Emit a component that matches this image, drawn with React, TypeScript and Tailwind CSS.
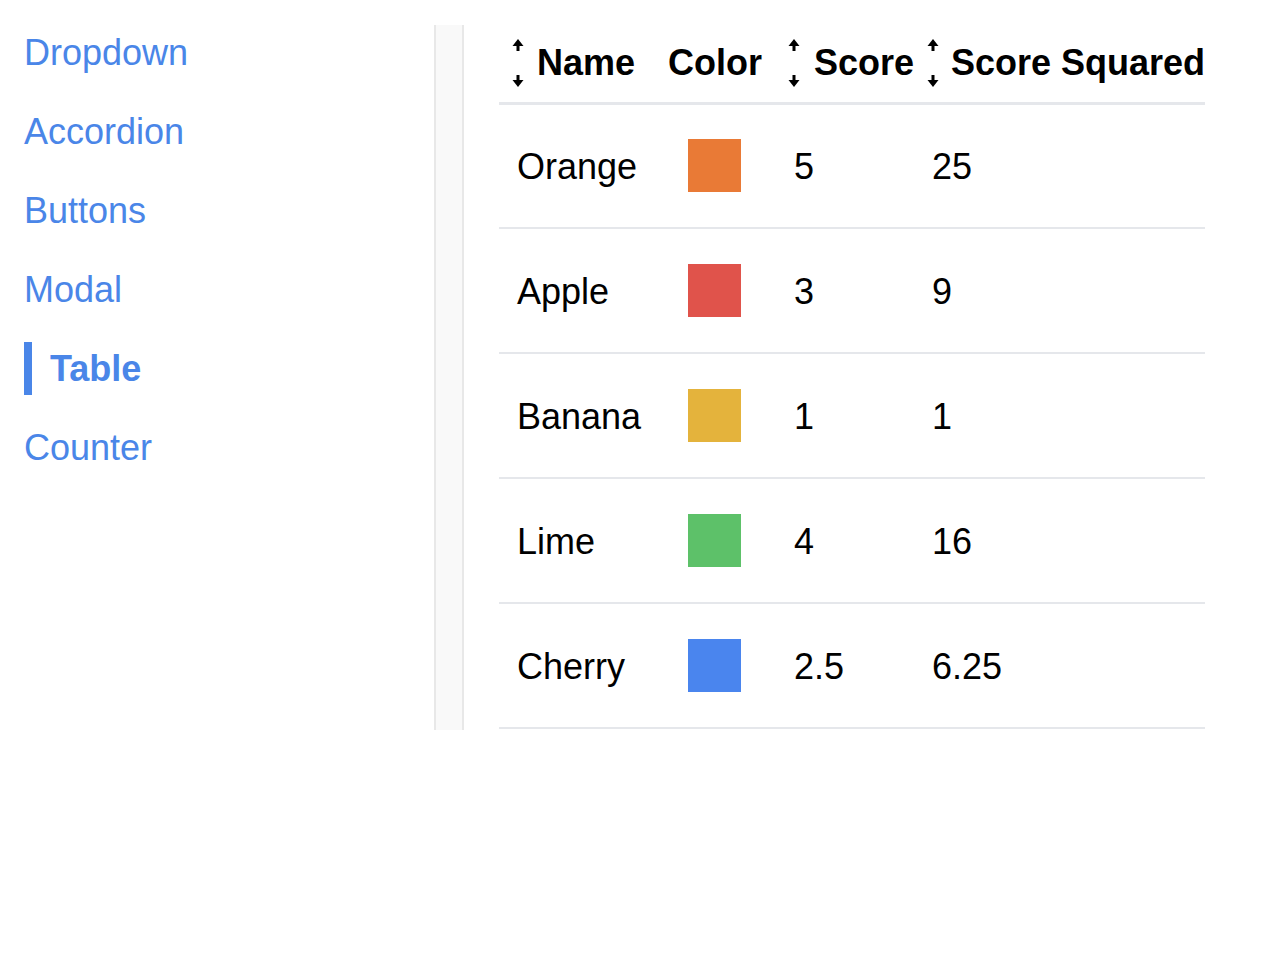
import React from "react";

const links = ["Dropdown", "Accordion", "Buttons", "Modal", "Table", "Counter"];

const fruits = [
    { name: "Orange", color: "bg-[#e97a36]", score: 5 },
    { name: "Apple", color: "bg-[#e0534b]", score: 3 },
    { name: "Banana", color: "bg-[#e4b33c]", score: 1 },
    { name: "Lime", color: "bg-[#5dc169]", score: 4 },
    { name: "Cherry", color: "bg-[#4a85ee]", score: 2.5 },
];

const SortIcon = () => (
    <svg width="12" height="48" viewBox="0 0 12 48" className="shrink-0">
        <polygon points="6,0 11.5,7 0.5,7" fill="black" />
        <rect x="4.5" y="6" width="3" height="6" fill="black" />
        <rect x="4.5" y="36" width="3" height="6" fill="black" />
        <polygon points="0.5,41 11.5,41 6,48" fill="black" />
    </svg>
);

const Sidebar = () => {
    return (
        <nav className="w-[410px] mt-[1px] flex flex-col gap-[26px]">
            {links.map((l) =>
                l === "Table" ? (
                    <div key={l} className="h-[53px] flex items-center border-l-[8px] border-[#4a86e8] pl-[18px] text-[36px] font-bold text-[#4a86e8]">
                        {l}
                    </div>
                ) : (
                    <div key={l} className="h-[53px] flex items-center text-[36px] text-[#4a86e8]">
                        {l}
                    </div>
                )
            )}
        </nav>
    );
};

const FruitTable = () => {
    return (
        <table className="table-fixed border-collapse w-[706px] text-[36px] text-black">
            <colgroup>
                <col className="w-[151px]" />
                <col className="w-[126px]" />
                <col className="w-[138px]" />
                <col className="w-[291px]" />
            </colgroup>
            <thead>
                <tr className="h-[78px]">
                    <th className="border-b-[3px] border-[#e5e7eb] p-0 pb-[1px] pl-[13px] text-left font-bold">
                        <div className="flex items-center gap-[13px]"><SortIcon />Name</div>
                    </th>
                    <th className="border-b-[3px] border-[#e5e7eb] p-0 pb-[1px] pl-[18px] text-left font-bold">Color</th>
                    <th className="border-b-[3px] border-[#e5e7eb] p-0 pb-[1px] pl-[12px] text-left font-bold">
                        <div className="flex items-center gap-[14px]"><SortIcon />Score</div>
                    </th>
                    <th className="border-b-[3px] border-[#e5e7eb] p-0 pb-[1px] pl-[13px] text-left font-bold whitespace-nowrap">
                        <div className="flex items-center gap-[12px]"><SortIcon />Score Squared</div>
                    </th>
                </tr>
            </thead>
            <tbody>
                {fruits.map((f) => (
                    <tr key={f.name} className="h-[125px]">
                        <td className="border-b-2 border-[#e5e7eb] p-0 pt-[2px] pl-[18px]">{f.name}</td>
                        <td className="border-b-2 border-[#e5e7eb] p-0 pl-[38px]">
                            <div className={`w-[53px] h-[53px] ${f.color}`} />
                        </td>
                        <td className="border-b-2 border-[#e5e7eb] p-0 pt-[2px] pl-[18px]">{f.score}</td>
                        <td className="border-b-2 border-[#e5e7eb] p-0 pt-[2px] pl-[18px]">{f.score * f.score}</td>
                    </tr>
                ))}
            </tbody>
        </table>
    );
};

export default function App() {
    return (
        <div className="min-h-screen bg-white pt-[25px] pl-[24px] flex items-start font-['Liberation_Sans',Arial,sans-serif]">
            <Sidebar />
            <div className="w-[30px] h-[705px] bg-[#f9f9f9] border-x-2 border-[#e8e8e8]" />
            <div className="ml-[35px]">
                <FruitTable />
            </div>
        </div>
    );
}
